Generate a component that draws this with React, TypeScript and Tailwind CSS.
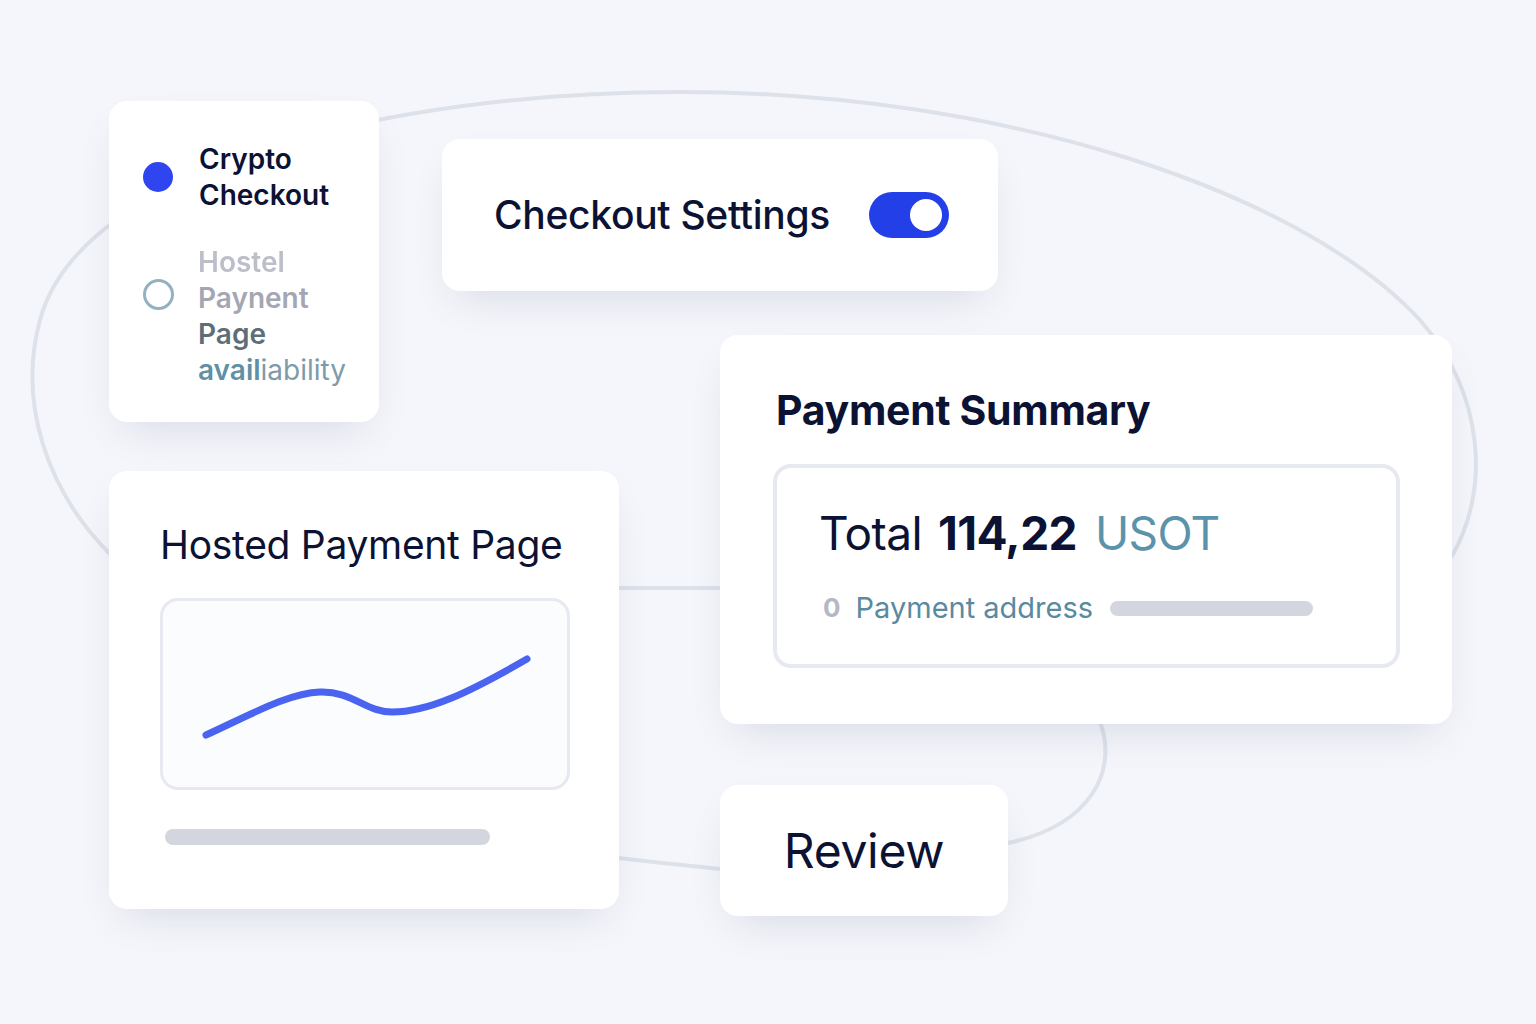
import React from "react";

const cardBase =
  "absolute rounded-[18px] bg-white shadow-[0_18px_44px_-14px_rgba(30,41,90,0.14)]";

function Connectors() {
  return (
    <svg
      className="absolute inset-0 h-full w-full"
      viewBox="0 0 1536 1024"
      fill="none"
      aria-hidden="true"
    >
      <g stroke="#dde1ea" strokeWidth="4" strokeLinecap="round">
        <path d="M112 556 C 45 490, 18 400, 40 320 C 80 170, 380 92, 680 92 C 1000 92, 1300 190, 1420 320 C 1485 395, 1490 490, 1452 556" />
        <path d="M1100 722 C 1118 770, 1092 825, 1008 843" />
        <path d="M618 588 L 722 588" />
        <path d="M618 858 C 655 862, 690 866, 722 869" />
      </g>
    </svg>
  );
}

function MethodCard() {
  return (
    <div className={`${cardBase} left-[109px] top-[101px] h-[321px] w-[270px] px-[34px] pt-[40px]`}>
      <div className="flex items-center gap-[26px]">
        <span className="h-[30px] w-[30px] shrink-0 rounded-full bg-[#2f45f0]" />
        <p className="text-[28px] font-semibold leading-[36px] text-[#0b1233]">
          Crypto
          <br />
          Checkout
        </p>
      </div>
      <div className="mt-[31px] flex items-start gap-[24px]">
        <span className="mt-[35px] h-[31px] w-[31px] shrink-0 rounded-full border-[3px] border-[#92b2c2]" />
        <p className="text-[28px] font-semibold leading-[36px]">
          <span className="text-[#bcbfca] blur-[0.5px]">Hostel</span>
          <br />
          <span className="text-[#a4a7b2]">Paynent</span>
          <br />
          <span className="text-[#5e6e79]">Page</span>
          <br />
          <span className="text-[#5f90a5]">avail</span>
          <span className="font-normal text-[#7e9ba9]">iability</span>
        </p>
      </div>
    </div>
  );
}

function SettingsCard() {
  return (
    <div className={`${cardBase} left-[442px] top-[139px] flex h-[152px] w-[556px] items-center gap-[39px] pl-[52px]`}>
      <h2 className="text-[39px] font-medium tracking-[-0.3px] text-[#0b1233]">
        Checkout Settings
      </h2>
      <div className="flex h-[46px] w-[80px] items-center justify-end rounded-full bg-[#2340e8] pr-[7px]">
        <span className="h-[32px] w-[32px] rounded-full bg-white" />
      </div>
    </div>
  );
}

function SummaryCard() {
  return (
    <div className={`${cardBase} left-[720px] top-[335px] h-[389px] w-[732px] pl-[53px] pt-[51px]`}>
      <h2 className="pl-[3px] text-[41px] font-bold leading-[48px] tracking-[-0.3px] text-[#0b1233]">
        Payment Summary
      </h2>
      <div className="mt-[30px] h-[204px] w-[627px] rounded-[18px] border-[4px] border-[#e7e9f0] pl-[42px] pt-[37px]">
        <div className="flex items-baseline text-[46px] leading-[56px] tracking-[-0.6px]">
          <span className="text-[#0b1233]">Total</span>
          <span className="ml-[16px] font-bold text-[#0b1233]">114,22</span>
          <span className="ml-[18px] text-[#5b93ab]">USOT</span>
        </div>
        <div className="mt-[30px] flex items-center">
          <span className="ml-[4px] text-[26px] font-bold leading-none text-[#b3b8c3]">0</span>
          <span className="ml-[15px] text-[29px] leading-[34px] text-[#5a8aa0]">
            Payment address
          </span>
          <span className="ml-[17px] h-[15px] w-[203px] rounded-full bg-[#d3d6df]" />
        </div>
      </div>
    </div>
  );
}

function HostedCard() {
  return (
    <div className={`${cardBase} left-[109px] top-[471px] h-[438px] w-[510px] pl-[51px] pt-[51px]`}>
      <h2 className="text-[39px] leading-[46px] tracking-[-0.3px] text-[#0b1233]">
        Hosted Payment Page
      </h2>
      <div className="mt-[30px] h-[192px] w-[410px] rounded-[18px] border-[3px] border-[#e8e9f0] bg-[#fbfcfe]">
        <svg viewBox="0 0 404 186" className="h-full w-full" fill="none" aria-hidden="true">
          <path
            d="M43 134 C 85 115, 125 92, 157 91 C 190 90, 202 111, 229 111 C 265 111, 305 92, 364 58"
            stroke="#4a63f0"
            strokeWidth="7"
            strokeLinecap="round"
          />
        </svg>
      </div>
      <div className="mt-[39px] ml-[5px] h-[16px] w-[325px] rounded-full bg-[#d3d6df]" />
    </div>
  );
}

function ReviewCard() {
  return (
    <div className={`${cardBase} left-[720px] top-[785px] flex h-[131px] w-[288px] items-center justify-center`}>
      <span className="text-[48px] tracking-[-0.3px] text-[#0b1233]">Review</span>
    </div>
  );
}

export default function App() {
  return (
    <div
      className="relative h-[1024px] w-[1536px] overflow-hidden bg-[#f5f6fb]"
      style={{ fontFamily: "Inter, 'Noto Sans', sans-serif" }}
    >
      <Connectors />
      <MethodCard />
      <SettingsCard />
      <SummaryCard />
      <HostedCard />
      <ReviewCard />
    </div>
  );
}
